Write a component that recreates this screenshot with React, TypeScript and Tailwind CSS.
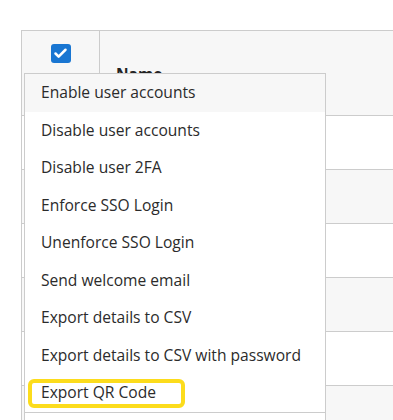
import React from 'react';
import { Check } from 'lucide-react';

const actions = [
  'Enable user accounts',
  'Disable user accounts',
  'Disable user 2FA',
  'Enforce SSO Login',
  'Unenforce SSO Login',
  'Send welcome email',
  'Export details to CSV',
  'Export details to CSV with password',
  'Export QR Code',
];

const rows = [0, 1, 2, 3, 4, 5];

export default function App() {
  return (
    <div className="h-[420px] overflow-hidden bg-white pt-[30px] pl-[21px] text-[#2b2b2b] font-['Open_Sans',sans-serif]">
      <div className="relative">
        {/* Users table */}
        <div className="border-l border-t border-[#ccc]">
          <div className="flex h-[85px] bg-[#f7f7f7] border-b border-[#ccc]">
            <div className="w-[78px] shrink-0 border-r border-[#ccc] flex justify-center pt-[13px]">
              <span className="w-[20px] h-[19px] rounded-[3px] bg-[#1976d2] flex items-center justify-center">
                <Check className="w-[15px] h-[15px] text-white" strokeWidth={4} />
              </span>
            </div>
            <div className="flex-1 pl-[16px] pt-[32px] text-[15.5px] font-bold text-[#222]">Name</div>
          </div>
          {rows.map((r) => (
            <div
              key={r}
              className={`h-[54px] border-b border-[#ccc] ${r % 2 === 1 ? 'bg-[#f7f7f7]' : 'bg-white'}`}
            />
          ))}
        </div>

        {/* Bulk actions dropdown */}
        <div className="absolute left-[3px] top-[43px] w-[302px] bg-white border border-[#ccc]">
          {actions.map((a, i) => (
            <div
              key={a}
              className={`relative h-[37.5px] flex items-center pl-[16px] text-[15.6px] ${i === 0 ? 'bg-[#f7f7f7]' : ''}`}
            >
              {a === 'Export QR Code' && (
                <span className="absolute left-[3px] top-[5px] w-[157px] h-[29px] border-[4px] border-[#fcdc1c] rounded-[6px]" />
              )}
              <span className="relative">{a}</span>
            </div>
          ))}
          <div className="border-t border-[#ccc]" />
          <div className="h-[37.5px]" />
        </div>
      </div>
    </div>
  );
}
